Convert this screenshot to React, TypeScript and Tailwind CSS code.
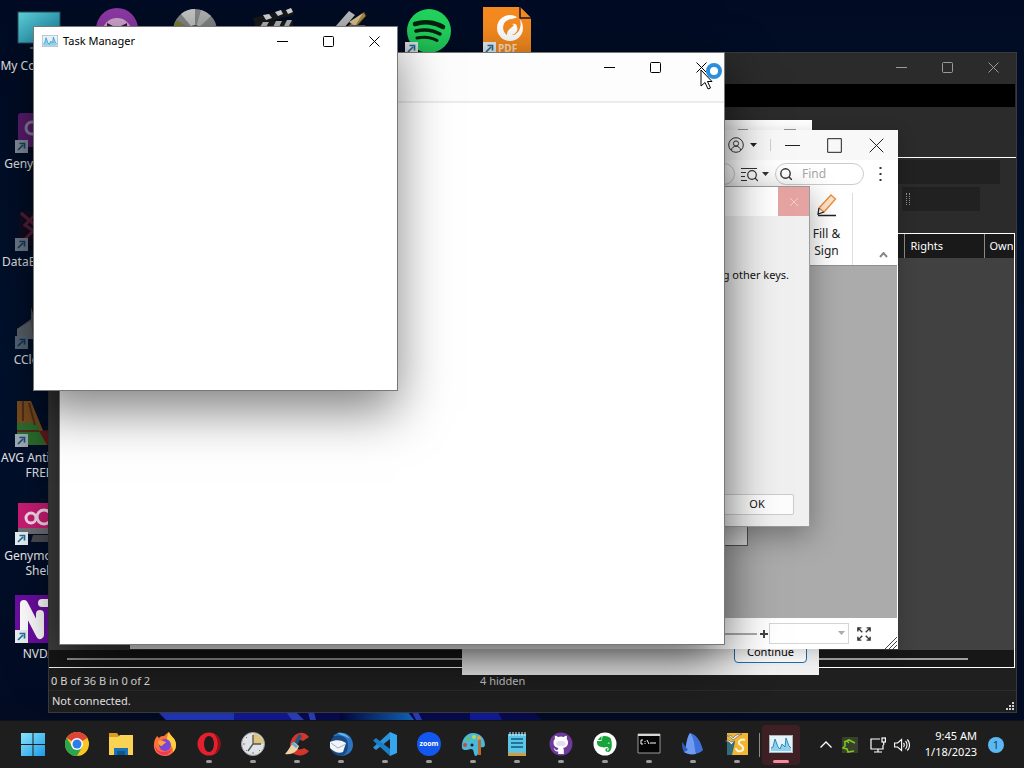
import React from 'react';
import clsx from 'clsx';

type IconProps = { className?: string };

// ---- Window controls ----

const Caption = ({ className, size = 'sm' }: { className?: string; size?: 'sm' | 'lg' }) => {
  const button = clsx('grid h-full place-items-center', size === 'sm' ? 'w-[46px]' : 'w-[42px]');
  const icon = size === 'sm' ? 'size-[11px]' : 'size-[15px]';
  return (
    <div className={clsx('flex h-full', className)}>
      <button aria-label="Minimize" className={button}>
        <svg className={icon} viewBox="0 0 11 11" stroke="currentColor">
          <path d="M0 5.5h11" vectorEffect="non-scaling-stroke" />
        </svg>
      </button>
      <button aria-label="Maximize" className={button}>
        <svg className={icon} viewBox="0 0 11 11" fill="none" stroke="currentColor">
          <rect x=".5" y=".5" width="10" height="10" rx={size === 'sm' ? 1 : 0} vectorEffect="non-scaling-stroke" />
        </svg>
      </button>
      <button aria-label="Close" className={button}>
        <svg className={icon} viewBox="0 0 11 11" stroke="currentColor">
          <path d="M.5.5l10 10M10.500.5l-10 10" vectorEffect="non-scaling-stroke" />
        </svg>
      </button>
    </div>
  );
};

const Caret = ({ className }: IconProps) => (
  <svg className={clsx('w-[7px]', className)} viewBox="0 0 7 4" fill="currentColor">
    <path d="M0 0h7L3.500 4z" />
  </svg>
);

const TaskManagerIcon = ({ className }: IconProps) => (
  <svg className={className} viewBox="0 0 24 18">
    <rect x=".5" y=".5" width="23" height="17" fill="#e4f3fa" stroke="#a9b4ba" />
    <path d="M2 16v-3l2-1 2-8 3 8 2 2 2-5 3 3 1-9 3 8 2 2v3z" fill="#8fd0ee" />
    <path d="M2 13l2-1 2-8 3 8 2 2 2-5 3 3 1-9 3 8 2 2" fill="none" stroke="#2f88b8" />
  </svg>
);

// ---- Desktop icons ----

const Shortcut = () => (
  <svg className="absolute bottom-0 left-0 size-[13px]" viewBox="0 0 13 13">
    <rect width="13" height="13" fill="#e8eef2" />
    <path d="M3 10l5-5M4.500 3.500H9.500V8.500" fill="none" stroke="#1e6f9c" strokeWidth="1.700" />
  </svg>
);

const ComputerArt = () => (
  <svg viewBox="0 0 48 48">
    <defs>
      <linearGradient id="screen" x1="0" y1="0" x2="1" y2="1">
        <stop offset="0" stopColor="#5fd0da" />
        <stop offset="1" stopColor="#157f9c" />
      </linearGradient>
    </defs>
    <rect x="3" y="5" width="42" height="31" fill="url(#screen)" stroke="#2a4b58" />
    <path d="M15 41h18" stroke="#4a5a60" strokeWidth="2" />
  </svg>
);

const MaskArt = () => (
  <svg viewBox="0 0 48 48">
    <circle cx="24" cy="22" r="21" fill="#8f3aa8" />
    <circle cx="24" cy="26" r="15" fill="#d3a8d2" />
    <path d="M14 16l6 3h8l6-3v9H14z" fill="#3a1642" />
  </svg>
);

const DiscArt = () => (
  <svg viewBox="0 0 48 48">
    <circle cx="24" cy="24" r="22" fill="#85878a" />
    <path d="M24 24L10 7A22 22 0 0 1 24 2z" fill="#c4c6c4" />
    <path d="M24 24L30 3a22 22 0 0 1 10 6z" fill="#b0b2b2" />
    <path d="M2 22a22 22 0 0 1 4-9l10 7z" fill="#7c8038" />
    <circle cx="24" cy="24" r="6" fill="#43463f" />
  </svg>
);

const ClapperArt = () => (
  <svg viewBox="0 0 48 48">
    <path d="M4 11L43 1l2 7L6 18z" fill="#17191c" />
    <path d="M14 8l6-1 3 4-6 2zM26 5l6-2 2 4-5 2zM37 3l5-2 2 4-5 2z" fill="#d4d4d4" />
    <path d="M6 14h38v13H6z" fill="#1b1b1d" />
    <path d="M14 15h6l-3 5h-6zM27 14h6l-3 6h-6zM38 13h5l-3 6h-5z" fill="#b5b5b5" />
  </svg>
);

const PenArt = () => (
  <svg viewBox="0 0 48 48">
    <path d="M8 20L22 4l6 4-12 14z" fill="#b9bdc0" />
    <path d="M18 22L37 5l2 4-12 13z" fill="#a98a4a" stroke="#4a3510" />
    <path d="M22 15l14-9-8 13z" fill="#d9c58e" />
    <path d="M24 18h14l4 10H22z" fill="#57595c" />
  </svg>
);

const SpotifyArt = () => (
  <svg viewBox="0 0 48 48" fill="none" stroke="#06230f" strokeLinecap="round">
    <circle cx="24" cy="24" r="22" fill="#22d35e" stroke="none" />
    <path d="M10 17c9-3 20-2 28 3" strokeWidth="4.500" />
    <path d="M11 24c8-2 17-1 24 3" strokeWidth="3.500" />
    <path d="M12 31c7-1.500 14-1 20 2.500" strokeWidth="3" />
  </svg>
);

const PdfArt = () => (
  <svg viewBox="0 0 48 48">
    <path d="M0 0h37l11 11v37H0z" fill="#f58a1f" />
    <path d="M37 0v11h11" fill="#f58a1f" stroke="#1b1420" strokeWidth="1.500" />
    <circle cx="27" cy="21" r="13" fill="#fff" />
    <path d="M29 12c-9 0-12 11-5 16 0-6 4-6 7-10l-2-1c3-1 5 0 5 3 2 4-3 8-6 8 8 1 13-12 7-18z" fill="#f58a1f" />
    <text x="15" y="45" fontSize="10" fontWeight="700" fill="#ffe0bd" fontFamily="Open Sans, sans-serif">
      PDF
    </text>
  </svg>
);

const GenyArt = () => (
  <svg viewBox="0 0 48 48">
    <rect x="3" y="8" width="42" height="34" rx="3" fill="#9b2aa8" />
    <circle cx="17" cy="23" r="6" fill="none" stroke="#f0d8f2" strokeWidth="3" />
  </svg>
);

const DataArt = () => (
  <svg viewBox="0 0 48 48">
    <path d="M4 8h40v34H4z" fill="#250c18" />
    <path d="M6 10l16 14L8 38M24 8L10 22l14 10" fill="none" stroke="#b0324f" strokeWidth="3" />
  </svg>
);

const CleanerArt = () => (
  <svg viewBox="0 0 48 48">
    <path d="M2 28l14-10V6l10 32H2z" fill="#c9b18a" />
    <path d="M2 28l14-8 2 18H2z" fill="#eee6d2" />
  </svg>
);

const AvgArt = () => (
  <svg viewBox="0 0 48 48">
    <path d="M2 2h14l18 44H2z" fill="#b26a1a" />
    <path d="M2 24h20l8 22H2z" fill="#3f9a32" />
    <path d="M2 32h22M8 2v20M14 4l6 22" stroke="#7a3d12" strokeWidth="2" />
    <path d="M24 32l8 14h14V30z" fill="#8e2418" />
  </svg>
);

const GenyShellArt = () => (
  <svg viewBox="0 0 48 48">
    <rect x="3" y="6" width="44" height="31" fill="#c91c74" />
    <path d="M3 31h44v6H3z" fill="#6f6f76" />
    <path d="M18 38h16v7H16z" fill="#4c4c52" />
    <g fill="none" stroke="#f5dcea" strokeWidth="3">
      <circle cx="16" cy="21" r="5" />
      <circle cx="29" cy="20" r="7" />
    </g>
  </svg>
);

const NvdaArt = () => (
  <svg viewBox="0 0 48 48">
    <rect width="48" height="48" fill="#6a0da0" />
    <path d="M9 41V9l16 31V19M27 8h14v9" fill="none" stroke="#fff" strokeWidth="8" strokeLinecap="round" strokeLinejoin="round" />
  </svg>
);

const topRow = [
  { name: 'mask', art: <MaskArt /> },
  { name: 'disc', art: <DiscArt /> },
  { name: 'clapper', art: <ClapperArt /> },
  { name: 'pen', art: <PenArt /> },
  { name: 'spotify', art: <SpotifyArt />, link: true },
  { name: 'pdf', art: <PdfArt />, link: true },
];

const leftColumn = [
  { name: 'Genymotion', art: <GenyArt />, dim: 'opacity-60' },
  { name: 'DataExplorer', art: <DataArt />, dim: 'opacity-50' },
  { name: 'CCleaner', art: <CleanerArt />, dim: 'opacity-40' },
  { name: 'AVG Antivirus FREE', art: <AvgArt />, dim: 'opacity-70' },
  { name: 'Genymotion Shell', art: <GenyShellArt /> },
  { name: 'NVDA', art: <NvdaArt /> },
];

type DesktopIconProps = { label?: string; art: React.ReactNode; link?: boolean; dim?: string };

const DesktopIcon = ({ label, art, link, dim }: DesktopIconProps) => (
  <div className="flex h-[98px] w-[78px] shrink-0 flex-col items-center gap-[3px] pt-[7px]">
    <div className={clsx('relative size-12', dim)}>
      {art}
      {link && <Shortcut />}
    </div>
    {label && <span className="text-center text-xs leading-[15px] text-[#e8e8e8]">{label}</span>}
  </div>
);

// ---- Windows ----

const FileWindow = () => (
  <section className="absolute top-[52px] left-12 flex h-[661px] w-[969px] flex-col border border-[#3a3a3a] bg-[#2b2b2b] text-[11px] text-white">
    <header className="flex h-[31px] shrink-0 justify-end pb-[2px] text-[#9a9a9a]">
      <Caption />
    </header>
    <div className="mr-px h-[23px] shrink-0 bg-black" />
    <div className="h-[51px] shrink-0 border-b border-white" />
    <div className="flex h-[75px] shrink-0 flex-col items-end gap-[3px] pt-[2px] pr-4">
      <div className="h-6 w-[103px] bg-[#212121]" />
      <div className="mr-5 flex h-6 w-[78px] items-center bg-[#212121] pl-1">
        <div className="h-3 w-1 border-x border-dotted border-[#909090]" />
      </div>
    </div>
    <div className="mr-px flex grow flex-col border border-l-0 border-white bg-[#414141]">
      <table className="w-full table-fixed text-left">
        <thead>
          <tr className="h-6 bg-[#191919]">
            <th aria-label="Name" />
            <th className="w-20 border-l border-[#8a8a8a] pl-[6px] font-normal">Rights</th>
            <th className="w-[30px] border-l border-[#8a8a8a] pl-[5px] font-normal">Own</th>
          </tr>
        </thead>
      </table>
      <div className="mt-auto flex h-[17px] items-center bg-[#171717] pr-[46px] pl-[18px]">
        <div className="h-[2px] grow bg-[#9f9f9f]" />
      </div>
    </div>
    <footer className="shrink-0 bg-[#1f1f1f] text-[#e4e4e4]">
      <div className="flex h-[23px] items-end border-b border-[#2b2b2b] pb-px pl-[2px]">
        <span className="w-[429px]">0 B of 36 B in 0 of 2</span>
        <span className="text-[#c4c4c4]">4 hidden</span>
      </div>
      <div className="flex h-[21px] items-center justify-between pl-[3px]">
        <span>Not connected.</span>
        <svg className="mt-2 mr-[2px] size-2" viewBox="0 0 8 8" fill="#d0d0d0">
          <path d="M6 0h2v2H6zM3 3h2v2H3zM6 3h2v2H6zM0 6h2v2H0zM3 6h2v2H3zM6 6h2v2H6z" />
        </svg>
      </div>
    </footer>
  </section>
);

const PdfWindow = () => (
  <section className="absolute top-[130px] left-[130px] flex h-[519px] w-[768px] flex-col bg-white shadow-[0_4px_16px_rgba(0,0,0,0.2)]">
    <header className="flex h-[30px] shrink-0 items-center justify-end bg-[#f8f8f8] pr-px text-[#222]">
      <button aria-label="Account" className="flex items-center gap-[6px]">
        <svg className="size-4" viewBox="0 0 16 16" fill="none" stroke="#333">
          <circle cx="8" cy="8" r="7.300" />
          <circle cx="8" cy="6.500" r="2.600" />
          <path d="M3.500 13c.5-5 8.500-5 9 0" />
        </svg>
        <Caret />
      </button>
      <div className="ml-[13px] h-3 w-px bg-[#cfcfcf]" />
      <Caption size="lg" />
    </header>
    <div className="flex h-[27px] shrink-0 items-center justify-end pr-[15px]">
      <div className="mr-[6px] h-[22px] w-16 rounded-full border border-[#ccc]" />
      <button aria-label="Search options" className="flex items-center gap-1 text-[#333]">
        <svg className="h-4 w-[17px]" viewBox="0 0 17 16" fill="none" stroke="currentColor" strokeWidth="1.200">
          <path d="M0 2.500h16M0 6.500h5M0 10.500h4M0 14.500h6M14 12l3 3" />
          <circle cx="11" cy="9" r="4.300" />
        </svg>
        <Caret />
      </button>
      <label className="ml-[6px] flex h-[22px] w-[89px] items-center gap-[10px] rounded-full border border-[#ccc] bg-white pl-1">
        <svg className="size-3 shrink-0" viewBox="0 0 12 12" fill="none" stroke="#333" strokeWidth="1.400">
          <circle cx="5.500" cy="5.500" r="4.700" />
          <path d="M9 9l3 3" />
        </svg>
        <input aria-label="Find" placeholder="Find" className="w-12 bg-transparent text-xs outline-none placeholder:text-[#a8a8a8]" />
      </label>
      <button aria-label="More" className="ml-[14px] text-[#333]">
        <svg className="h-4 w-[5px]" viewBox="0 0 5 16" fill="currentColor">
          <path d="M1.500 1h2v2h-2zM1.500 7h2v2h-2zM1.500 13h2v2h-2z" />
        </svg>
      </button>
    </div>
    <div className="flex h-[78px] shrink-0 items-end justify-end">
      <button className="flex h-[72px] w-[52px] flex-col items-center border-r border-[#ddd] text-xs leading-[17px] text-[#222]">
        <svg className="mb-2 size-6 shrink-0" viewBox="0 0 24 24" fill="none" strokeWidth="1.300">
          <path d="M16 2l4.500 4L9 19l-5-4z" fill="#fde3c8" stroke="#e88a3c" />
          <path d="M4 15l-1 6 6-2M3 22.500h18" stroke="#222" />
        </svg>
        <span>Fill &amp;</span>
        <span>Sign</span>
      </button>
      <button aria-label="Collapse ribbon" className="w-[45px] pb-[7px] pl-[26px] text-[#888]">
        <svg className="h-[6px] w-[9px]" viewBox="0 0 9 6" fill="none" stroke="currentColor" strokeWidth="2">
          <path d="M1 5l3.500-4L8 5" />
        </svg>
      </button>
    </div>
    <div className="mr-px grow border-t border-[#909090] bg-[#ababab]" />
    <footer className="flex h-[31px] shrink-0 items-center justify-end pr-px">
      <div className="h-[2px] w-32 bg-[#aaa]" />
      <svg className="mr-px ml-[3px] size-2" viewBox="0 0 8 8" stroke="#444" strokeWidth="2">
        <path d="M4 0v8M0 4h8" />
      </svg>
      <div className="relative">
        <select aria-label="Zoom" className="block h-[21px] w-20 appearance-none border border-[#d5d5d5] bg-white" />
        <Caret className="pointer-events-none absolute top-2 right-1 text-[#aaa]" />
      </div>
      <button aria-label="Full screen" className="ml-2">
        <svg className="size-[14px]" viewBox="0 0 16 16" fill="none" stroke="#333" strokeWidth="1.600">
          <path d="M1 5V1h4M1 1l5 5M11 1h4v4M15 1l-5 5M1 11v4h4M1 15l5-5M11 15h4v-4M15 15l-5-5" />
        </svg>
      </button>
      <svg className="ml-[14px] size-3 self-end" viewBox="0 0 12 12" stroke="#444">
        <path d="M0 12L12 0M4 12l8-8M8 12l4-4" />
      </svg>
    </footer>
  </section>
);

const KeyDialog = () => (
  <section className="absolute top-[186px] left-[420px] flex h-[341px] w-[390px] flex-col border border-[#9a9a9a] bg-[#f0f0f0] text-[11px] text-[#111] shadow-[0_8px_28px_rgba(0,0,0,0.35)]">
    <header className="flex h-[29px] shrink-0 justify-end bg-white">
      <button aria-label="Close" className="grid w-[31px] place-items-center bg-[#e5a3a1] text-[#f3cccb]">
        <svg className="size-2" viewBox="0 0 8 8" stroke="currentColor">
          <path d="M0 0l8 8M8 0L0 8" />
        </svg>
      </button>
    </header>
    <p className="pt-[51px] pr-5 text-right leading-4">using other keys.</p>
    <button className="mt-auto mr-[15px] mb-[11px] h-[21px] w-[74px] self-end rounded-xs border border-[#ccc] bg-[#fdfdfd]">OK</button>
  </section>
);

// ---- Taskbar ----

const taskbarIcons: { name: string; open?: boolean; art: React.ReactNode }[] = [
  {
    name: 'Start',
    art: (
      <>
        <defs>
          <linearGradient id="start" x1="0" y1="0" x2="1" y2="1">
            <stop offset="0" stopColor="#8be3fb" />
            <stop offset="1" stopColor="#1a9be8" />
          </linearGradient>
        </defs>
        <path d="M0 1h11.500v11H0zM12.500 1H24v11H12.500zM0 13h11.500v11H0zM12.500 13H24v11H12.500z" fill="url(#start)" />
      </>
    ),
  },
  {
    name: 'Chrome',
    art: (
      <>
        <circle cx="12" cy="12" r="12" fill="#f9c623" />
        <path d="M12 12L1.600 6A12 12 0 0 1 22.400 6z" fill="#dd4436" />
        <path d="M1.600 6A12 12 0 0 0 12 24l5.200-9L7 14z" fill="#2da44e" />
        <circle cx="12" cy="12" r="6" fill="#fff" />
        <circle cx="12" cy="12" r="4.500" fill="#2d7de8" />
      </>
    ),
  },
  {
    name: 'File Explorer',
    art: (
      <>
        <path d="M0 1h8l2 3h14v8H0z" fill="#dc9d1d" />
        <path d="M0 5h9l2-2h13v20H0z" fill="#fbd354" />
        <path d="M5 16h14v7H5z" fill="#1873b8" />
        <path d="M8 19h8v4H8z" fill="#0f568f" />
      </>
    ),
  },
  {
    name: 'Firefox',
    art: (
      <>
        <path d="M12 24C5 24 0 19 1 12c0-4 2-6 3-8l2 2c2-2 3-2 5-2 2-2 3-3 5-4 1 4 7 6 7 13 0 6-5 11-11 11z" fill="#ff7139" />
        <path d="M16 0c1 4 7 6 7 13 0 3-1 5-3 7 0-5-2-8-6-10 0-4 0-7 2-10z" fill="#ffd23b" />
        <circle cx="12" cy="13" r="6" fill="#7a45d8" />
        <path d="M2 13c2 8 12 9 17 3-1 5-5 8-9 7s-8-4-8-10z" fill="#f2385d" />
        <path d="M5 9c3-2 5 0 8 1-1 2-3 2-4 4-2 0-4-2-4-5z" fill="#ffa436" />
      </>
    ),
  },
  {
    name: 'Opera',
    open: true,
    art: (
      <>
        <circle cx="12" cy="12" r="11.500" fill="#e3202d" />
        <path d="M17 2a11 11 0 0 1 0 20c5-5 5-15 0-20z" fill="#8f0f18" />
        <ellipse cx="12" cy="12" rx="5" ry="8" fill="#1d1d1d" />
      </>
    ),
  },
  {
    name: 'Clock',
    open: true,
    art: (
      <>
        <circle cx="12" cy="12" r="11.500" fill="#dfe3e6" stroke="#9aa0a6" />
        <path d="M12 12V1.500A10.500 10.500 0 0 1 22.500 12z" fill="#ddc57e" />
        <path d="M12 3v9h8M12 12l-5 7" stroke="#555" strokeWidth="1.300" fill="none" />
        <path d="M2 12h2M12 20v2M5 5l1 1M5 19l1-1M19 19l-1-1" stroke="#777" />
      </>
    ),
  },
  {
    name: 'CCleaner',
    open: true,
    art: (
      <>
        <path d="M24 5l-6 4c-5-3-8 0-8 4s5 6 9 3l5 3c-5 7-19 6-19-5C5 2 18-4 24 5z" fill="#d2362a" />
        <path d="M14 2l3 2-5 9-3-2z" fill="#24547c" />
        <path d="M9 10l5 4c-2 6-7 9-14 8 3-3 5-8 9-12z" fill="#efd3a4" />
        <path d="M8 10l5 4-2 2-5-4z" fill="#5ab4e0" />
      </>
    ),
  },
  {
    name: 'Thunderbird',
    open: true,
    art: (
      <>
        <path d="M4 4C12-3 24 2 24 13c0 7-6 11-12 11C18 17 14 8 4 4z" fill="#2c74c0" />
        <path d="M4 5c7-4 15 0 15 8s-4 10-7 11C4 24 0 17 1 10z" fill="#184a86" />
        <path d="M1 10c6-3 12-2 16 1l-3 9c-4 2-9 0-13-4z" fill="#f2f5f8" />
        <path d="M2 11l7 5 8-4" fill="none" stroke="#9db0c4" />
        <path d="M8 1c5-1 11 2 13 6-4-3-8-3-13-6z" fill="#64b5ee" />
      </>
    ),
  },
  {
    name: 'VS Code',
    open: true,
    art: (
      <>
        <path d="M17 0l7 3v18l-7 3V0z" fill="#35a6ee" />
        <path d="M17 0v7L3 18l-3-2.500z" fill="#2b93dc" />
        <path d="M17 24v-7L3 6 0 8.500z" fill="#1c7ec4" />
      </>
    ),
  },
  {
    name: 'Zoom',
    open: true,
    art: (
      <>
        <circle cx="12" cy="12" r="12" fill="#1457ee" />
        <text x="12" y="14" textAnchor="middle" fontSize="7" fontWeight="700" fill="#fff" fontFamily="Open Sans, sans-serif">
          zoom
        </text>
      </>
    ),
  },
  {
    name: 'Paint',
    open: true,
    art: (
      <>
        <path d="M12 1c7 0 12 5 12 12-1 4-4 1-6 3s1 6-3 8c-3 0-1-7-5-7-4 1-8 2-9-1C0 8 5 1 12 1z" fill="#4ab8dc" />
        <circle cx="7" cy="7" r="2" fill="#6cc04a" />
        <circle cx="13" cy="5" r="2" fill="#b9d84a" />
        <circle cx="4" cy="13" r="2" fill="#d2452f" />
        <circle cx="11" cy="13" r="1.500" fill="#1e1e1e" />
        <circle cx="18" cy="6" r="2" fill="#e8a03a" />
        <path d="M17 9l2-2 1 2v14h-3z" fill="#b86b2c" />
      </>
    ),
  },
  {
    name: 'Notepad',
    open: true,
    art: (
      <>
        <path d="M3 2h18v21H3z" fill="#5cc5e6" />
        <path d="M3 21h18v3H3z" fill="#d69a3c" />
        <path d="M6 7h12M6 11h12M6 15h12" stroke="#0d5c80" strokeWidth="1.500" />
        <path d="M5 0v4M8 0v4M11 0v4M14 0v4M17 0v4M20 0v4" stroke="#d8f0f8" />
      </>
    ),
  },
  {
    name: 'GitHub Desktop',
    open: true,
    art: (
      <>
        <circle cx="12" cy="12" r="11.500" fill="#6e3a9c" />
        <path
          d="M12 4.500c-1 0-2 .2-3 .5C8 4.200 7 3.800 6 3.800c-.4 1-.3 2 0 3C5 8 4.500 9 4.500 10.500c0 4 2.500 5 5 5.500-.5.500-.7 1-.8 2-2 .8-2.500-1.500-4-2 .8 2.500 2 4 4.500 3.500V22h5.600v-4c0-1-.3-1.600-.8-2 2.500-.5 5-1.500 5-5.500 0-1.500-.5-2.500-1.300-3.700.3-1 .3-2 0-3-1 0-2 .4-3 1.200-.9-.3-1.800-.5-2.700-.5z"
          fill="#fff"
        />
        <path d="M8.500 9.500c2-.6 5-.6 7 0 1.800 1 1.500 4-1 4.500h-5c-2.500-.5-2.800-3.500-1-4.500z" fill="#e6dcf0" />
      </>
    ),
  },
  {
    name: 'Evernote',
    open: true,
    art: (
      <>
        <circle cx="12" cy="12" r="11.500" fill="#fff" />
        <path d="M9.500 4.500c3-1 5.500 0 8 1.500 2 4 2 13-2 14-4 0-4-4-1-4v1.500c-1 .5-.5 1.500.5 1 1.500-1 .5-4-1.500-3.500-3 1-5 0-7-.500-2.500-1-2.500-3-2.500-5.500h4.500z" fill="#17a53a" />
        <path d="M4.500 8l4-4v4z" fill="#17a53a" />
        <path d="M14.500 11.500c.5-1.500 2-1.500 2.500 0z" fill="#fff" />
      </>
    ),
  },
  {
    name: 'Command Prompt',
    open: true,
    art: (
      <>
        <path d="M1 2h22v19H1z" fill="#050505" stroke="#9a9a9a" />
        <path d="M1 2h22v2H1z" fill="#d8d8d8" />
        <path d="M6 8H4v4h2M8 9v1M8 11v1M10 8l2 4M13 11h6" fill="none" stroke="#fff" />
      </>
    ),
  },
  {
    name: 'Wireshark',
    open: true,
    art: (
      <>
        <path d="M9 1c8 2 11 10 13 17-4 5-13 5-19 2C6 14 5 7 9 1z" fill="#3f6fd8" />
        <path d="M9 1c5 6 4 14 6 21-5 1-9 0-12-2C6 14 5 7 9 1z" fill="#6f9cf0" />
        <path d="M1 10l6 8-4 2c-2-3-2-7-2-10z" fill="#2d5fc0" />
      </>
    ),
  },
  {
    name: 'OpenOffice',
    open: true,
    art: (
      <>
        <path d="M2 1h21v22H2z" fill="#f2b632" />
        <path d="M2 10h8l-3 13H2z" fill="#2f6f7c" />
        <path d="M20 8c-5-2-8 3-5 4.500s5 5 1 6.500c-3 1-5-1-5-3" fill="none" stroke="#fff6d8" strokeWidth="2" />
        <path d="M1 4c4-2 6 0 7 2 2-3 5-4 9-4-3 1-6 4-9 6C6 5 4 4 1 4zM0 9c4-2 5 0 6 1l4-1-4 4c-1-3-3-4-6-4z" fill="#eef4f6" stroke="#2d3c40" strokeWidth=".5" />
      </>
    ),
  },
];

const Taskbar = () => (
  <footer className="flex h-12 shrink-0 items-center border-t border-[#10131c] bg-[#1e1e1e] pl-[11px] text-white">
    <nav className="flex">
      {taskbarIcons.map(({ name, open, art }) => (
        <button key={name} aria-label={name} className="flex h-10 w-11 flex-col items-center gap-1 pt-[7px]">
          <svg className="size-6 shrink-0" viewBox="0 0 24 24">
            {art}
          </svg>
          {open && <span className="h-[3px] w-[6px] rounded-full bg-[#9b9b9b]" />}
        </button>
      ))}
      <button
        aria-label="Task Manager"
        className="relative flex h-10 w-11 flex-col items-center before:absolute before:top-2 before:left-0 before:h-6 before:w-px before:bg-[#8b8b8b]"
      >
        <span className="flex h-10 w-[38px] flex-col items-center gap-[7px] rounded bg-[#3e1f24] pt-[10px]">
          <TaskManagerIcon className="h-[18px] w-6 shrink-0" />
          <span className="h-[3px] w-4 rounded-full bg-[#f58a9c]" />
        </span>
      </button>
    </nav>
    <div className="ml-auto flex items-center pr-5">
      <button aria-label="Hidden icons">
        <svg className="h-[7px] w-3" viewBox="0 0 12 7" fill="none" stroke="#fff" strokeWidth="1.300">
          <path d="M.5 6.500L6 1l5.500 5.500" />
        </svg>
      </button>
      <svg className="ml-[10px] size-4" viewBox="0 0 16 16" fill="none">
        <rect width="16" height="16" fill="#36402c" />
        <path d="M2 5l5-2 6 3M3 5v4l-2 2 4 1 1 3 6-1M5 4l2 2" stroke="#7fc31c" strokeWidth="1.600" />
      </svg>
      <div className="ml-3 flex items-center gap-2">
        <svg className="size-4" viewBox="0 0 16 16" fill="none" stroke="#fff" strokeWidth="1.200">
          <path d="M10 2H1v10h12V8M4 15h8M8 12v3" />
          <rect x="12" y="1" width="3.400" height="4" />
          <path d="M13.700 5v3" />
        </svg>
        <svg className="size-4" viewBox="0 0 16 16" fill="none" stroke="#fff" strokeWidth="1.100">
          <path d="M.6 6v4h3l4 3.500v-11L3.600 6zM9.500 6c1 1 1 3 0 4M11.500 4c2 2 2 6 0 8M13.300 2.500c3 3 3 8 0 11" />
        </svg>
      </div>
      <div className="w-[67px] pb-px text-right text-[11px] leading-4">
        <div>9:45 AM</div>
        <div>1/18/2023</div>
      </div>
      <button className="ml-[11px] grid size-4 place-items-center rounded-full bg-[#5cb8f2] text-[11px] text-[#14405c]">1</button>
    </div>
  </footer>
);

export default function App() {
  return (
    <div className="flex h-screen flex-col overflow-hidden bg-black font-['Noto_Sans','Open_Sans',sans-serif]">
      <main className="relative grow overflow-hidden bg-linear-to-b from-[#010c24] via-[#01122e] to-[#020b22]">
        <svg className="absolute bottom-0 left-[150px] h-2 w-[420px]" viewBox="0 0 420 8" preserveAspectRatio="none">
          <defs>
            <linearGradient id="bloom">
              <stop offset="0" stopColor="#04063a" />
              <stop offset="1" stopColor="#1162b4" />
            </linearGradient>
          </defs>
          <path d="M8 0h376l8 8H16z" fill="#080b4a" />
          <path d="M8 0h76v8H16z" fill="#2034b0" />
          <path d="M84 0h52l8 8H84z" fill="#12178a" />
          <path d="M136 0h10l8 8h-12zM158 0h6l2 8h-6z" fill="#2b3bb0" />
          <path d="M190 0h68l6 8h-74z" fill="url(#bloom)" />
          <path d="M262 0h6l4 8h-6z" fill="#2b3bb0" />
          <path d="M320 0h28l4 8h-32z" fill="#121a90" />
        </svg>

        <div className="flex">
          <div>
            <DesktopIcon label="My Computer" art={<ComputerArt />} />
            {leftColumn.map(({ name, art, dim }) => (
              <DesktopIcon key={name} label={name} art={art} dim={dim} link />
            ))}
          </div>
          {topRow.map(({ name, art, link }) => (
            <DesktopIcon key={name} art={art} link={link} />
          ))}
        </div>

        <FileWindow />

        <section className="absolute top-[120px] left-[480px] flex h-[426px] w-[332px] justify-end bg-white pt-[9px] pr-4 text-[#999]">
          <div className="flex h-px gap-9">
            <span className="w-[10px] bg-current" />
            <span className="w-3 bg-current" />
          </div>
        </section>

        <section className="absolute top-[400px] left-[462px] flex h-[275px] w-[357px] items-end justify-end bg-[#f0f0f0] pr-3 pb-3">
          <button className="h-[21px] w-[73px] rounded border border-[#1a6fb5] bg-[#fdfdfd] text-[11px] text-black">Continue</button>
        </section>

        <PdfWindow />
        <div className="absolute top-[500px] left-[600px] h-[46px] w-[148px] border border-[#555] bg-[#e4e4e4]" />
        <KeyDialog />

        <section className="absolute top-[53px] left-[60px] h-[591px] w-[664px] bg-white text-black shadow-[0_0_0_1px_#777,0_16px_48px_rgba(0,0,0,0.65)]">
          <header className="flex h-[50px] justify-end border-b-2 border-[#ebebeb] bg-[#fdfdfd]">
            <div className="h-7">
              <Caption />
            </div>
          </header>
        </section>

        <section className="absolute top-[27px] left-[34px] h-[363px] w-[363px] bg-white text-black shadow-[0_0_0_1px_#777,0_20px_48px_rgba(0,0,0,0.5)]">
          <header className="flex h-7 items-center">
            <TaskManagerIcon className="ml-2 h-3 w-4" />
            <h1 className="ml-[5px] text-[11px]">Task Manager</h1>
            <Caption className="ml-auto" />
          </header>
        </section>

        {/* busy cursor */}
        <svg className="absolute top-[60px] left-[700px] h-[30px] w-6" viewBox="0 0 24 30">
          <circle cx="14" cy="11" r="6" fill="#fff" stroke="#2d8fdc" strokeWidth="4" />
          <path d="M1 10v16l4-3.500 3 6.500 2.500-1-3-6.500H12z" fill="#fff" stroke="#000" />
        </svg>
      </main>
      <Taskbar />
    </div>
  );
}
